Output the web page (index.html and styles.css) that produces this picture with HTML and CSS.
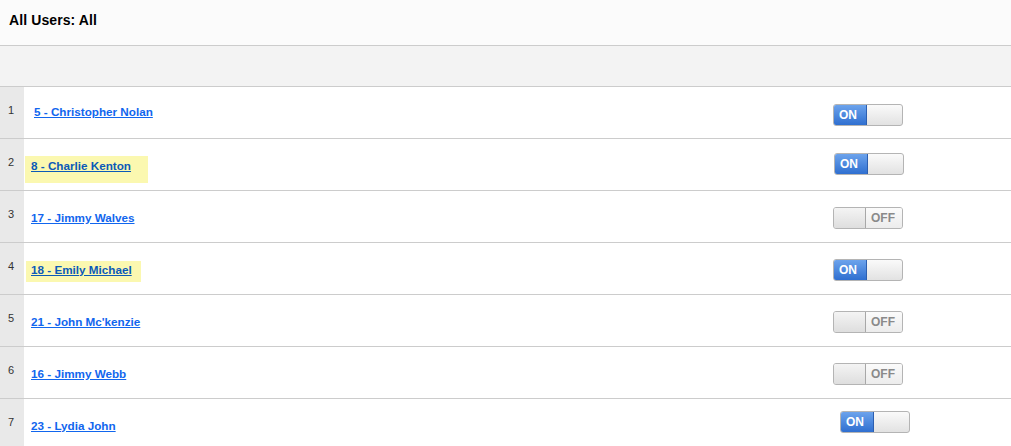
FILE: index.html
```html
<!DOCTYPE html>
<html>
<head>
<meta charset="utf-8">
<link rel="stylesheet" href="styles.css">
</head>
<body>
<div class="page">
  <div class="header">All Users: All</div>
  <div class="subheader"></div>
  <div class="rows">
    <div class="row row--first">
      <div class="num">1</div>
      <div class="name"><a href="#">5 - Christopher Nolan</a></div>
      <div class="sw"><span class="toggle on"><span class="lbl">ON</span><span class="knob"></span></span></div>
    </div>
    <div class="row row--second">
      <div class="num">2</div>
      <div class="name"><span class="hl hl--tall"><a href="#">8 - Charlie Kenton</a></span></div>
      <div class="sw"><span class="toggle on"><span class="lbl">ON</span><span class="knob"></span></span></div>
    </div>
    <div class="row">
      <div class="num">3</div>
      <div class="name"><a href="#">17 - Jimmy Walves</a></div>
      <div class="sw"><span class="toggle off"><span class="knob"></span><span class="lbl">OFF</span></span></div>
    </div>
    <div class="row row--fourth">
      <div class="num">4</div>
      <div class="name"><span class="hl hl--short"><a href="#">18 - Emily Michael</a></span></div>
      <div class="sw"><span class="toggle on"><span class="lbl">ON</span><span class="knob"></span></span></div>
    </div>
    <div class="row">
      <div class="num">5</div>
      <div class="name"><a href="#">21 - John Mc'kenzie</a></div>
      <div class="sw"><span class="toggle off"><span class="knob"></span><span class="lbl">OFF</span></span></div>
    </div>
    <div class="row">
      <div class="num">6</div>
      <div class="name"><a href="#">16 - Jimmy Webb</a></div>
      <div class="sw"><span class="toggle off"><span class="knob"></span><span class="lbl">OFF</span></span></div>
    </div>
    <div class="row row--last">
      <div class="num">7</div>
      <div class="name"><a href="#">23 - Lydia John</a></div>
      <div class="sw"><span class="toggle on"><span class="lbl">ON</span><span class="knob"></span></span></div>
    </div>
  </div>
</div>
</body>
</html>
```
FILE: styles.css
```css
html, body {
  margin: 0;
  padding: 0;
  background: #ffffff;
  font-family: "Liberation Sans", Arial, sans-serif;
}
.page {
  width: 1011px;
  height: 446px;
  overflow: hidden;
}
.header {
  box-sizing: border-box;
  height: 46px;
  padding: 11px 0 0 9px;
  background: #fbfbfb;
  border-bottom: 1px solid #cccccc;
  font-size: 14px;
  font-weight: bold;
  line-height: 18px;
  letter-spacing: 0.1px;
  color: #000;
}
.subheader {
  height: 41px;
  box-sizing: border-box;
  background: #f3f3f3;
  border-bottom: 1px solid #cccccc;
}
.row {
  display: grid;
  grid-template-columns: 24px 1fr 178px;
  height: 52px;
  box-sizing: border-box;
  border-bottom: 1px solid #cccccc;
}
.num {
  background: #e9e9e9;
  padding: 17px 0 0 8px;
  font-size: 11px;
  line-height: 13px;
  color: #333;
}
.name {
  padding: 20px 0 0 7px;
  font-size: 11.7px;
  line-height: 13px;
  font-weight: bold;
}
.name a {
  color: #1166ee;
  text-decoration: underline;
}
.row--first .name {
  padding: 18px 0 0 10px;
}
.hl {
  display: inline-block;
  background: #fbf8b0;
}
.hl a {
  color: #0b5ab8;
}
.hl--tall {
  margin: -3px 0 0 -6px;
  padding: 3px 17px 11px 6px;
}
.hl--short {
  margin: -2px 0 0 -5px;
  padding: 2px 9px 6px 5px;
}
.sw {
  padding-top: 16px;
}
.row--first .sw { padding-top: 17px; }
.row--second .sw { padding-top: 14px; padding-left: 1px; }
.row--fourth .sw { padding-top: 16px; }
.row--last .sw { padding-top: 12px; padding-left: 7px; }
.toggle {
  display: flex;
  width: 70px;
  height: 22px;
  box-sizing: border-box;
  border: 1px solid #b4b4b4;
  border-radius: 3px;
  overflow: hidden;
  background: linear-gradient(#fafafa, #e2e2e2);
}
.toggle .lbl {
  font-size: 12px;
  font-weight: bold;
  line-height: 20px;
}
.toggle.on .lbl {
  width: 33px;
  padding-left: 5px;
  box-sizing: border-box;
  color: #fff;
  background: linear-gradient(#6ca3ec, #2f6fd0);
  border-right: 1px solid #2c5fb0;
}
.toggle .knob {
  flex: 1;
}
.toggle.off .knob {
  flex: 0 0 31px;
  border-right: 1px solid #a8a8a8;
  background: linear-gradient(#f4f4f4, #dedede);
}
.toggle.off .lbl {
  flex: 1;
  padding-left: 5px;
  color: #8a8a8a;
  background: linear-gradient(#fbfbfb, #ececec);
}
```
